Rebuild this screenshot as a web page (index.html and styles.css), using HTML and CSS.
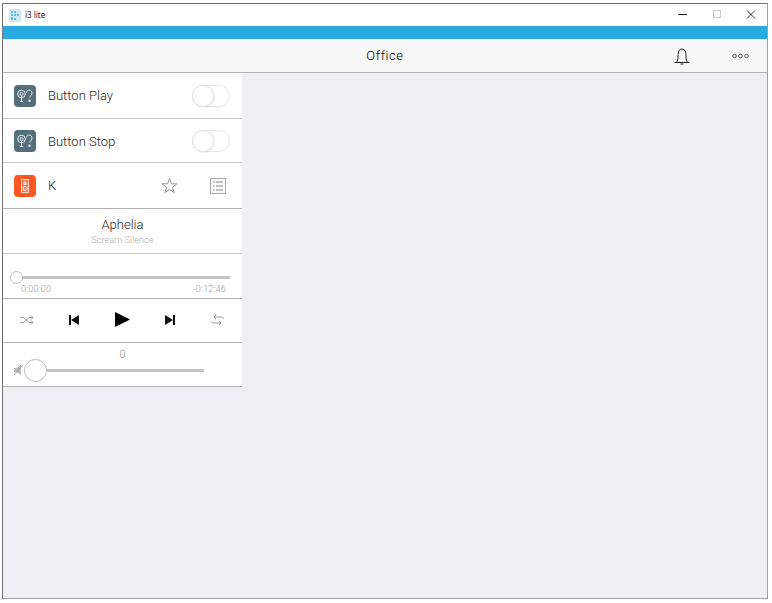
FILE: index.html
```html
<!DOCTYPE html>
<html lang="en">
<head>
<meta charset="utf-8">
<title>i3 lite</title>
<link rel="stylesheet" href="styles.css">
</head>
<body>
<div class="window">
  <header class="titlebar">
    <svg class="app-icon" width="12" height="13" viewBox="0 0 12 13"><rect width="12" height="13" rx="1.500" fill="#cfe8f6"/><path d="M2 2h2v2H2zM5 2h2v2H5zM2 5h2v2H2zM5 5h2v2H5zM8 5h2v2H8zM2 8h2v3H2zM5 9h2v2H5z" fill="#6db8e4"/></svg>
    <span class="app-name">i3 lite</span>
    <div class="win-controls">
      <svg class="win-btn" width="45" height="22" viewBox="0 0 45 22"><path d="M28 10.500h9" stroke="#222"/></svg>
      <svg class="win-btn" width="30" height="22" viewBox="0 0 30 22"><rect x="18.500" y="6.500" width="7" height="7" fill="none" stroke="#ccc"/></svg>
      <svg class="win-btn" width="42" height="22" viewBox="0 0 42 22"><path d="M22 6.500l8 8M30 6.500l-8 8" stroke="#333" fill="none"/></svg>
    </div>
  </header>
  <div class="accent"></div>
  <nav class="navbar">
    <span class="nav-title">Office</span>
    <svg class="bell" width="18" height="18" viewBox="0 0 18 18"><path d="M1.500 15.500h15M3.500 15.500c1-1.500 1.500-3 1.500-6.500C5 5 6 2 9 2s4 3 4 7c0 3.500.5 5 1.500 6.500M7.500 17h3" fill="none" stroke="#222" stroke-width="1"/></svg>
    <svg class="more" width="17" height="6" viewBox="0 0 17 6"><g fill="none" stroke="#666"><circle cx="2.500" cy="3" r="1.800"/><circle cx="8.500" cy="3" r="1.800"/><circle cx="14.500" cy="3" r="1.800"/></g></svg>
  </nav>
  <main class="content">
    <section class="panel">
      <div class="row row-play">
        <span class="tile tile-slate"><svg width="16" height="14" viewBox="0 0 16 14"><g fill="none" stroke="#e8eef0" stroke-width="1"><circle cx="4.500" cy="5" r="3.800"/><circle cx="4.500" cy="5" r="1.500"/><path d="M4.500 7v5M2.800 12.500h3.400"/><path d="M9.500 3.500C10 1.500 11 1 12 1c2 0 3 1.500 3 3 0 2-1.800 2.500-2.200 4.500"/></g><path d="M11.500 10.500h2v2.500h-2z" fill="#e8eef0"/></svg></span>
        <span class="row-label">Button Play</span>
        <span class="switch"><span class="knob"></span></span>
      </div>
      <div class="row row-stop">
        <span class="tile tile-slate"><svg width="16" height="14" viewBox="0 0 16 14"><g fill="none" stroke="#e8eef0" stroke-width="1"><circle cx="4.500" cy="5" r="3.800"/><circle cx="4.500" cy="5" r="1.500"/><path d="M4.500 7v5M2.800 12.500h3.400"/><path d="M9.500 3.500C10 1.500 11 1 12 1c2 0 3 1.500 3 3 0 2-1.800 2.500-2.200 4.500"/></g><path d="M11.500 10.500h2v2.500h-2z" fill="#e8eef0"/></svg></span>
        <span class="row-label">Button Stop</span>
        <span class="switch"><span class="knob"></span></span>
      </div>
      <div class="row row-k">
        <span class="tile tile-orange"><svg width="8" height="14" viewBox="0 0 8 14"><rect x=".5" y=".5" width="7" height="13" fill="#ffb39b" fill-opacity=".35" stroke="#ffd9cc"/><circle cx="4" cy="9.500" r="2" fill="none" stroke="#fff"/><path d="M3 3h2v2.500H3z" fill="none" stroke="#fff"/></svg></span>
        <span class="row-label">K</span>
        <svg class="star" width="17" height="17" viewBox="0 0 17 17"><path d="M8.500 1.500l1.900 5.300h5.600l-4.500 3.400 1.700 5.500-4.700-3.300-4.700 3.300 1.700-5.500L1 6.800h5.600z" fill="none" stroke="#999"/></svg>
        <svg class="list" width="16" height="16" viewBox="0 0 16 16"><rect x=".5" y=".5" width="15" height="15" fill="#fafafa" stroke="#aaa"/><path d="M3 4h1.500M3 8h1.500M3 12h1.500M6 4h7M6 8h7M6 12h7" stroke="#888"/></svg>
      </div>
      <div class="track">
        <div class="track-title">Aphelia</div>
        <div class="track-sub">Scream Silence</div>
      </div>
      <div class="progress">
        <div class="slider"><span class="progress-knob"></span></div>
        <div class="times"><span>0:00:00</span><span>-0:12:46</span></div>
      </div>
      <div class="transport">
        <svg width="14" height="10" viewBox="0 0 14 10"><path d="M0 2.500h3c2.500 0 4 5 6.500 5H13M0 7.500h3c2.500 0 4-5 6.500-5H13M11 .5l2 2-2 2M11 5.500l2 2-2 2" fill="none" stroke="#888" stroke-width=".8"/></svg>
        <svg width="12" height="10" viewBox="1 0 12 10"><path d="M1 0h2v10H1zM11 0v10L3 5z" fill="#111"/></svg>
        <svg width="15" height="15" viewBox="0 0 15 15"><path d="M0 0l15 7.500L0 15z" fill="#000"/></svg>
        <svg width="12" height="10" viewBox="1 0 12 10"><path d="M9 0h2v10H9zM1 0v10l8-5z" fill="#111"/></svg>
        <svg width="13" height="10" viewBox="0 0 13 10"><path d="M.5 6v.5C.5 7.500 1.500 8 3 8h7M12.500 4v-.5C12.500 2.500 11.500 2 10 2H3M8 6l2 2-2 2M5 0L3 2l2 2" fill="none" stroke="#888" stroke-width=".8"/></svg>
      </div>
      <div class="volume">
        <div class="volume-value">0</div>
        <div class="volume-line">
          <svg width="10" height="12" viewBox="0 0 10 12"><path d="M0 4h2.500L7 1v10L2.500 8H0z" fill="#bbb"/><path d="M0 11L9 1" stroke="#999"/></svg>
          <div class="volume-slider"><span class="volume-knob"></span></div>
        </div>
      </div>
    </section>
  </main>
</div>
</body>
</html>
```
FILE: styles.css
```css
html, body { margin: 0; height: 100%; background: #fff; }
body {
  padding: 3px 3px 3px 2px;
  box-sizing: border-box;
  height: 603px;
  overflow: hidden;
  font-family: Roboto, "Liberation Sans", Arial, sans-serif;
  font-weight: 300;
}
.window {
  width: 766px;
  height: 596px;
  box-sizing: border-box;
  border: 1px solid #707070;
  border-right-color: #a0a0a0;
  border-bottom-color: #a0a0a0;
  display: flex;
  flex-direction: column;
  background: #efeff4;
}
.titlebar {
  height: 22px;
  background: #fff;
  display: flex;
  align-items: center;
  padding-left: 6px;
  flex: none;
}
.app-icon { flex: none; margin-right: 4px; }
.app-name { font: 400 8px "Noto Sans", sans-serif; color: #301030; margin-top: -1px; }
.win-controls { margin-left: auto; display: flex; }
.win-btn { display: block; }
.accent { height: 13px; background: #29abe2; flex: none; }
.navbar {
  height: 33px;
  background: #f7f7f7;
  border-bottom: 1px solid #b2b2b2;
  flex: none;
  display: flex;
  align-items: center;
  position: relative;
  justify-content: flex-end;
  padding-right: 18px;
  gap: 41px;
}
.nav-title {
  position: absolute;
  left: 0;
  right: 0;
  text-align: center;
  font-size: 13px;
  letter-spacing: .6px;
  color: #000;
}
.bell, .more { position: relative; }
.content { flex: 1; }
.panel { width: 239px; background: #fff; }
.row {
  display: flex;
  align-items: center;
  padding: 0 11px;
  border-bottom: 1px solid #c8c7cc;
}
.row-play { height: 45px; padding-right: 12px; }
.row-stop { height: 43px; padding-right: 12px; }
.row-k { height: 45px; border-bottom-color: #b2b2b2; }
.tile {
  width: 22px;
  height: 22px;
  border-radius: 4px;
  display: flex;
  align-items: center;
  justify-content: center;
  flex: none;
}
.tile-slate { background: #546e7a; }
.tile-orange { background: #ff5722; }
.row-label { margin-left: 12px; font-size: 13px; color: #222; flex: 1; }
.row-stop .row-label { padding-top: 1px; }
.switch {
  width: 38px;
  height: 22px;
  box-sizing: border-box;
  border: 1px solid #e6e6e6;
  border-radius: 11px;
  display: block;
  position: relative;
  background: #fff;
}
.knob {
  position: absolute;
  left: -1px;
  top: -1px;
  width: 22px;
  height: 22px;
  box-sizing: border-box;
  border-radius: 50%;
  background: #fff;
  border: 1px solid #e2e2e2;
  box-shadow: 1px 1px 1px rgba(0,0,0,.06);
}
.star { margin-right: 32px; }
.list { margin-right: 5px; }
.track {
  border-bottom: 1px solid #c8c7cc;
  text-align: center;
  padding-bottom: 1px;
  box-sizing: border-box;
  height: 45px;
  display: flex;
  flex-direction: column;
  justify-content: center;
}
.track-title { font-size: 13px; color: #222; }
.track-sub { font-size: 9px; letter-spacing: .1px; color: #aaa; margin-top: 3px; }
.progress {
  height: 44px;
  border-bottom: 1px solid #b2b2b2;
  padding: 0 12px 0 8px;
  position: relative;
}
.slider { height: 3px; background: #c4c4c4; position: relative; top: 22px; margin-left: 5px; }
.progress-knob {
  position: absolute;
  left: -6px;
  top: -5px;
  width: 13px;
  height: 13px;
  box-sizing: border-box;
  border-radius: 50%;
  background: #fff;
  border: 1px solid #bbb;
}
.times {
  position: relative;
  top: 27px;
  display: flex;
  justify-content: space-between;
  padding: 0 4px 0 10px;
  font-size: 9px;
  letter-spacing: .2px;
  color: #999;
}
.transport {
  box-sizing: border-box;
  height: 44px;
  border-bottom: 1px solid #b2b2b2;
  display: flex;
  align-items: center;
  justify-content: space-between;
  padding: 0 18px 2px 17px;
}
.volume {
  height: 43px;
  border-bottom: 1px solid #b2b2b2;
  position: relative;
}
.volume-value { text-align: center; font-size: 10px; color: #888; padding-top: 6px; }
.volume-line { display: flex; align-items: center; padding-left: 11px; margin-top: 4px; }
.volume-slider { height: 3px; background: #c4c4c4; width: 168px; margin-left: 12px; position: relative; }
.volume-knob {
  position: absolute;
  left: -12px;
  top: -10px;
  width: 23px;
  height: 23px;
  box-sizing: border-box;
  border-radius: 50%;
  background: #fff;
  border: 1px solid #bbb;
}
```
